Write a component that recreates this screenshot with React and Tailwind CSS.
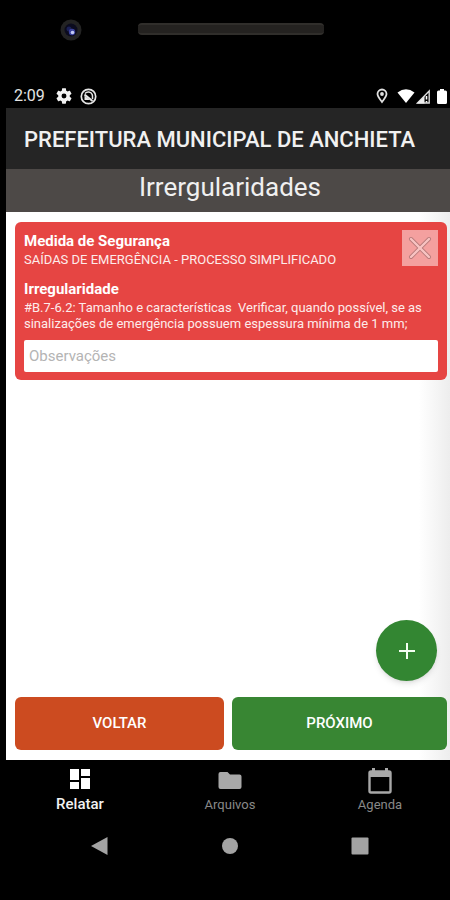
import React from 'react';

function SpeakerBezel() {
  return (
    <div className="flex h-[84px] items-start pl-[54px] pt-[19px]">
      <svg width="22" height="22" viewBox="0 0 22 22" aria-hidden="true">
        <circle cx="11" cy="11" r="10.5" fill="#232323" />
        <circle cx="11" cy="11" r="6.5" fill="#0b0b1e" />
        <circle cx="9" cy="10" r="2.5" fill="#1b2056" />
        <circle cx="12" cy="13" r="3.2" fill="#39409a" />
        <circle cx="12.5" cy="13.5" r="1.8" fill="#c3caf5" />
      </svg>
      <div className="ml-14 mt-1 h-3 w-[186px] rounded border-y-2 border-[#302e2b] bg-[#242220]" />
    </div>
  );
}

function StatusBar() {
  return (
    <div className="flex h-6 items-center pl-2 pr-[3px] text-white">
      <span className="w-10 text-base leading-6 text-[#e4e4e4]">2:09</span>
      <svg className="ml-[2px]" width="16" height="16" viewBox="2 2 20 20" fill="#f2f2f2" aria-hidden="true">
        <path d="M19.14 12.94c.04-.3.06-.61.06-.94 0-.32-.02-.64-.07-.94l2.03-1.58c.18-.14.23-.41.12-.61l-1.92-3.32c-.12-.22-.37-.29-.59-.22l-2.39.96c-.5-.38-1.03-.7-1.62-.94l-.36-2.54c-.04-.24-.24-.41-.48-.41h-3.84c-.24 0-.43.17-.47.41l-.36 2.54c-.59.24-1.13.57-1.62.94l-2.39-.96c-.22-.08-.47 0-.59.22L2.74 8.87c-.12.21-.08.47.12.61l2.03 1.58c-.05.3-.09.63-.09.94s.02.64.07.94l-2.03 1.58c-.18.14-.23.41-.12.61l1.92 3.32c.12.22.37.29.59.22l2.39-.96c.5.38 1.03.7 1.62.94l.36 2.54c.05.24.24.41.48.41h3.84c.24 0 .44-.17.47-.41l.36-2.54c.59-.24 1.13-.56 1.62-.94l2.39.96c.22.08.47 0 .59-.22l1.92-3.32c.12-.22.07-.47-.12-.61zM12 15.1A3.1 3.1 0 1 1 12 8.900a3.1 3.1 0 0 1 0 6.200z" />
      </svg>
      <svg className="ml-2" width="17" height="17" viewBox="0 0 17 17" fill="none" stroke="#e6e6e6" aria-hidden="true">
        <circle cx="8.5" cy="8.5" r="7.2" strokeWidth="1.7" />
        <path d="M5 5.500C7 3.200 11 3.500 12.200 6.500c.5 1.500.3 3 .3 4.500" strokeWidth="1.500" />
        <path d="M4.500 6.500l8 6.500" strokeWidth="2" />
        <path d="M4.500 7.500L10 12H4.500z" fill="#e6e6e6" stroke="none" />
      </svg>
      <svg className="ml-auto" width="12" height="16" viewBox="0 0 12 16" fill="none" stroke="#e0e0e0" aria-hidden="true">
        <path d="M6 14C3.800 11 1.500 8.500 1.500 6a4.500 4.500 0 0 1 9 0c0 2.500-2.300 5-4.500 8z" strokeWidth="1.800" />
        <circle cx="6" cy="6" r="1.900" fill="#e0e0e0" stroke="none" />
      </svg>
      <svg className="ml-[9px]" width="18" height="14" viewBox="0 0 18 14" fill="#fff" aria-hidden="true">
        <path d="M0.500 3.500Q9-3 17.500 3.500L9 14z" />
      </svg>
      <svg className="ml-px" width="15" height="15" viewBox="0 0 15 15" aria-hidden="true">
        <path d="M1.500 14L13.200 2V14z" fill="none" stroke="#ddd" strokeWidth="1.400" />
        <path d="M1 14.500L8.500 7v7.500z" fill="#eee" />
        <path d="M10.500 7v3.500M10.500 12v1.500" stroke="#fff" strokeWidth="1.600" />
      </svg>
      <svg className="ml-[6px]" width="10" height="15" viewBox="0 0 10 15" fill="#fff" aria-hidden="true">
        <path d="M3 0h4v1.500h1.500q1.500 0 1.500 1.500v10.500q0 1.500-1.500 1.500h-7Q0 15 0 13.500V3q0-1.500 1.500-1.500H3z" />
      </svg>
    </div>
  );
}

function IrregularityCard() {
  return (
    <section className="rounded-md bg-[#e64543] px-[9px] pb-2 pt-2 text-white">
      <div className="flex items-start justify-between">
        <div className="pt-px">
          <h2 className="text-[15px] font-bold leading-5">Medida de Segurança</h2>
          <p className="text-[13px] leading-[18px] text-[#fdeceb]">SAÍDAS DE EMERGÊNCIA - PROCESSO SIMPLIFICADO</p>
        </div>
        <button type="button" aria-label="Remover" className="flex h-9 w-9 shrink-0 items-center justify-center bg-[#f4a09f]">
          <svg width="24" height="24" viewBox="0 0 24 24" strokeLinecap="round" aria-hidden="true">
            <path d="M3 3l18 18M21 3L3 21" stroke="#b57878" strokeWidth="4" />
            <path d="M3 3l18 18M21 3L3 21" stroke="#f8c3c2" strokeWidth="2.400" />
          </svg>
        </button>
      </div>
      <h2 className="mt-[10px] text-[15px] font-bold leading-5">Irregularidade</h2>
      <p className="whitespace-pre-wrap pt-px text-[13px] leading-4 text-[#fdeceb]">
        {'#B.7-6.2: Tamanho e características  Verificar, quando possível, se as sinalizações de emergência possuem espessura mínima de 1 mm;'}
      </p>
      <input
        type="text"
        aria-label="Observações"
        placeholder="Observações"
        className="mt-2 block h-8 w-full rounded-xs bg-white px-[5px] text-[15px] text-gray-700 placeholder:text-[#b4b4b4] outline-none"
      />
    </section>
  );
}

function TabBar() {
  return (
    <nav className="flex h-16 justify-between bg-black pl-11 pr-10 pt-2 text-[13px] leading-4 text-[#888]">
      <a href="#relatar" aria-current="page" className="flex w-[60px] flex-col items-center text-[15px] font-medium leading-4 text-[#f2f2f2]">
        <svg className="mb-[6px]" width="22" height="22" viewBox="0 0 22 22" fill="#fff" aria-hidden="true">
          <path d="M1 1h9v11H1zM12 1h9v7h-9zM1 14h9v7H1zM12 10h9v11h-9z" />
        </svg>
        <span>Relatar</span>
      </a>
      <a href="#arquivos" className="flex w-[60px] flex-col items-center">
        <svg className="mb-[7px]" width="24" height="22" viewBox="0 0 24 22" fill="#a8a8a8" aria-hidden="true">
          <path d="M2.500 4h7L12 6.500h9.500q2 0 2 2V19q0 2-2 2h-19q-2 0-2-2V6q0-2 2-2z" />
        </svg>
        <span>Arquivos</span>
      </a>
      <a href="#agenda" className="flex w-[60px] flex-col items-center">
        <svg className="mb-[3px]" width="26" height="26" viewBox="0 0 26 26" aria-hidden="true">
          <path d="M4 3.500h18q1.500 0 1.500 1.500v18q0 1.500-1.500 1.500H4Q2.500 24.500 2.500 23V5q0-1.500 1.500-1.500z" fill="none" stroke="#a8a8a8" strokeWidth="2.400" />
          <path d="M2 3h22v6H2zM5 0h3v4H5zM18 0h3v4h-3z" fill="#a8a8a8" />
        </svg>
        <span>Agenda</span>
      </a>
    </nav>
  );
}

function SystemNav() {
  return (
    <div className="flex h-[76px] items-start justify-between bg-black pl-[83px] pr-20 pt-3">
      <button type="button" aria-label="Voltar">
        <svg width="20" height="20" viewBox="0 0 20 20" fill="#a3a3a3"><path d="M18.500 1v18L2 10z" /></svg>
      </button>
      <button type="button" aria-label="Início">
        <svg width="20" height="20" viewBox="0 0 20 20" fill="#a3a3a3"><circle cx="10" cy="10" r="8" /></svg>
      </button>
      <button type="button" aria-label="Recentes">
        <svg width="20" height="20" viewBox="0 0 20 20" fill="#a3a3a3"><rect x="1.500" y="1.500" width="17" height="17" rx="1" /></svg>
      </button>
    </div>
  );
}

export default function App() {
  return (
    <div className="flex min-h-screen flex-col bg-black pl-[6px] font-['Roboto',sans-serif]">
      <SpeakerBezel />
      <StatusBar />
      <header>
        <div className="flex h-[61px] items-center bg-[#252525] px-[18px] pt-[2px]">
          <p className="whitespace-nowrap text-[22px] font-medium text-[#f1f1f1]">PREFEITURA MUNICIPAL DE ANCHIETA</p>
        </div>
        <h1 className="h-[43px] bg-[#4d4947] pl-1 text-center text-[26px] leading-9 text-[#f0f0f0]">Irrergularidades</h1>
      </header>
      <main className="flex grow flex-col bg-linear-to-r from-white from-93% to-[#ededed] pb-[10px] pl-[9px] pr-[3px] pt-[10px]">
        <IrregularityCard />
        <button
          type="button"
          aria-label="Adicionar"
          className="mb-4 mr-[10px] mt-auto flex h-[61px] w-[61px] items-center justify-center self-end rounded-full bg-[#338632] shadow-md"
        >
          <svg width="18" height="18" viewBox="0 0 18 18" stroke="#f4fff2" strokeWidth="2" aria-hidden="true">
            <path d="M9 1v16M1 9h16" />
          </svg>
        </button>
        <div className="grid grid-cols-[209fr_215fr] gap-2 text-[15px] font-medium text-white">
          <button type="button" className="h-[53px] rounded-md bg-[#cc4b20]">VOLTAR</button>
          <button type="button" className="h-[53px] rounded-md bg-[#388633]">PRÓXIMO</button>
        </div>
      </main>
      <TabBar />
      <SystemNav />
    </div>
  );
}
